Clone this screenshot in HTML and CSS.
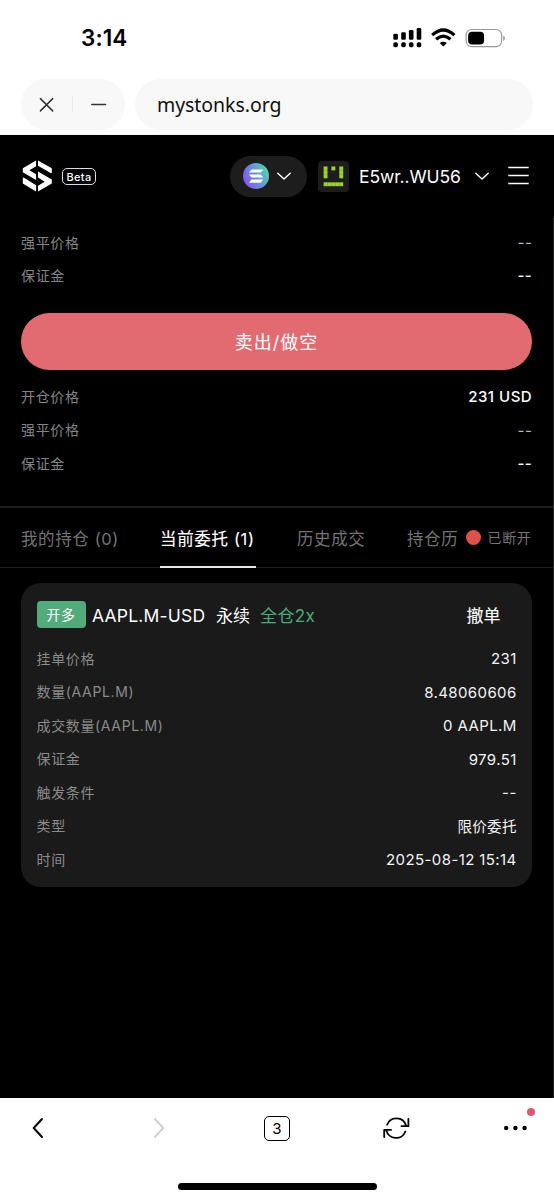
FILE: index.html
```html
<!DOCTYPE html>
<html lang="zh-CN">
<head>
<meta charset="utf-8">
<title>mystonks.org</title>
<link rel="stylesheet" href="styles.css">
</head>
<body>
<div class="phone">
  <div class="status">
    <span class="clock">3:14</span>
    <svg class="status-icons" width="114" height="24" viewBox="0 0 114 24">
      <g fill="#000">
        <rect x="0.3" y="7.7" width="4.6" height="6" rx="1.3"/><rect x="8.2" y="6.2" width="4.6" height="7.5" rx="1.3"/><rect x="15.9" y="4" width="4.6" height="9.7" rx="1.3"/><rect x="23.7" y="2" width="4.6" height="11.7" rx="1.3"/>
        <rect x="0.3" y="16.3" width="4.6" height="5" rx="1.7"/><rect x="8.2" y="16.3" width="4.6" height="5" rx="1.7"/><rect x="15.9" y="16.3" width="4.6" height="5" rx="1.7"/><rect x="23.7" y="16.3" width="4.6" height="5" rx="1.7"/>
        <path d="M46.7 17 Q50.3 14.3 53.9 17 L50.3 20.6Z"/>
      </g>
      <path d="M39.2 9.2 Q50.3 -1.1 61.4 9.2 M43.1 13.3 Q50.3 6.8 57.5 13.3" fill="none" stroke="#000" stroke-width="3.2"/>
      <rect x="73.1" y="3.5" width="35.5" height="17.2" rx="5.6" fill="none" stroke="#999" stroke-width="1.2"/>
      <rect x="75.1" y="5.7" width="16" height="12.9" rx="4" fill="#000"/>
      <path d="M110.2 9.2 Q112 10 112 12.1 Q112 14.3 110.2 15Z" fill="#999"/>
    </svg>
  </div>
  <div class="address">
    <div class="controls">
      <svg width="104" height="51" viewBox="0 0 104 51" fill="none" stroke="#333" stroke-width="1.5" stroke-linecap="round"><path d="M19.4 19.6 L31.7 31.9 M31.7 19.6 L19.4 31.9 M70.8 25.5 H84.5"/><path d="M51.5 18 V33" stroke="#e9e9e9" stroke-width="1"/></svg>
    </div>
    <div class="url">mystonks.org</div>
  </div>

  <main class="app">
    <header class="top">
      <svg class="logo" width="31" height="32" viewBox="0 0 31 32" fill="#fff">
        <path d="M14.1 .5 V6.2 L7.4 10.2 L14.1 14.3 V20 L.8 12.2 V8.3Z"/>
        <path d="M16 .5 L29.8 8.3 V12.8 L29 13.2 L16 5.8Z"/>
        <path d="M16 11.4 L29.8 19.5 V23.6 L16 31.5 V25.8 L22.7 21.7 L16 17.4Z"/>
        <path d="M.8 17.9 L1.6 17.5 L14.1 25.3 V31.5 L.8 23.6Z"/>
      </svg>
      <span class="beta">Beta</span>
      <div class="chain">
        <svg width="26" height="26" viewBox="0 0 26 26">
          <defs><linearGradient id="sol" x1="0" y1=".75" x2="1" y2=".25"><stop offset="0" stop-color="#8a50ed"/><stop offset=".5" stop-color="#688ee0"/><stop offset="1" stop-color="#55d9a7"/></linearGradient></defs>
          <circle cx="13" cy="13" r="13" fill="url(#sol)"/>
          <g fill="#fff"><path d="M8.4 6.4 H20.2 L17.8 9.6 H6Z"/><path d="M6 11.4 H17.8 L20.2 14.6 H8.4Z"/><path d="M8.4 16.5 H20.2 L17.8 19.7 H6Z"/></g>
        </svg>
        <svg class="caret" width="14" height="8" viewBox="0 0 14 8"><path d="M.8 1.2 L7 7 L13.2 1.2"/></svg>
      </div>
      <svg class="avatar" width="31" height="31" viewBox="0 0 31 31">
        <rect width="31" height="31" rx="4" fill="#1d1d1d"/>
        <g fill="#9bd62b"><rect x="5.6" y="5.5" width="3.9" height="11.8"/><rect x="13.4" y="5.5" width="3.9" height="3.9"/><rect x="21.3" y="5.5" width="3.9" height="11.8"/><rect x="5.6" y="21.3" width="19.6" height="3.9"/></g>
        <path d="M5.6 9.4 H9.5 M5.6 13.4 H9.5 M21.3 9.4 H25.2 M21.3 13.4 H25.2 M9.5 21.3 V25.2 M13.4 21.3 V25.2 M17.3 21.3 V25.2 M21.3 21.3 V25.2" stroke="#1d1d1d" stroke-width=".25" opacity=".6"/>
      </svg>
      <span class="wallet">E5wr..WU56</span>
      <svg class="caret wallet-caret" width="14" height="8" viewBox="0 0 14 8"><path d="M.8 1.2 L7 7 L13.2 1.2"/></svg>
      <svg class="menu" width="21" height="20" viewBox="0 0 21 20"><path d="M.3 1.5 H20.7 M.3 9.5 H20.7 M.3 17.5 H20.7" stroke="#fff" stroke-width="1.7"/></svg>
    </header>

    <section class="quote">
      <div class="row"><span>强平价格</span><b class="dim">--</b></div>
      <div class="row"><span>保证金</span><b class="strong">--</b></div>
      <button class="sell">卖出/做空</button>
      <div class="row"><span>开仓价格</span><b class="strong usd">231 USD</b></div>
      <div class="row"><span>强平价格</span><b class="dim">--</b></div>
      <div class="row"><span>保证金</span><b class="strong">--</b></div>
    </section>

    <nav class="tabs">
      <span class="tab tab-held">我的持仓 (0)</span>
      <span class="tab tab-active">当前委托 (1)</span>
      <span class="tab tab-trades">历史成交</span>
      <span class="tab tab-clip">持仓历</span>
      <span class="link-state"><i class="dot"></i>已断开</span>
    </nav>

    <article class="order">
      <div class="order-head">
        <span class="side">开多</span>
        <span class="pair">AAPL.M-USD</span>
        <span class="kind">永续</span>
        <span class="lever">全仓2x</span>
        <span class="cancel">撤单</span>
      </div>
      <div class="row"><span>挂单价格</span><b>231</b></div>
      <div class="row"><span>数量(AAPL.M)</span><b>8.48060606</b></div>
      <div class="row"><span>成交数量(AAPL.M)</span><b>0 AAPL.M</b></div>
      <div class="row"><span>保证金</span><b>979.51</b></div>
      <div class="row"><span>触发条件</span><b>--</b></div>
      <div class="row"><span>类型</span><b class="han">限价委托</b></div>
      <div class="row"><span>时间</span><b>2025-08-12 15:14</b></div>
    </article>
    <div class="scrollbar"></div>
  </main>

  <footer class="browser">
    <div class="tools">
      <svg width="12" height="22" viewBox="0 0 12 22" fill="none" stroke="#000" stroke-width="2" stroke-linecap="round" stroke-linejoin="round"><path d="M10 2 L1.7 11 L10 20"/></svg>
      <svg class="forward" width="12" height="22" viewBox="0 0 12 22" fill="none" stroke="#c8c8c8" stroke-width="1.8" stroke-linecap="round" stroke-linejoin="round"><path d="M2 2 L10.3 11 L2 20"/></svg>
      <span class="count">3</span>
      <svg width="28" height="24" viewBox="0 0 28 24" fill="none" stroke="#000" stroke-width="1.8" stroke-linecap="round" stroke-linejoin="round"><path d="M4.1 8.7 A10 10 0 0 1 23 9.4 M25.4 3 V10.2 H18.5 M22.4 15.5 A10 10 0 0 1 3.3 14.2 M1.2 21 V13.8 H8.1"/></svg>
      <span class="more"><svg width="24" height="6" viewBox="0 0 24 6"><circle cx="2.2" cy="3" r="2.2"/><circle cx="11.4" cy="3" r="2.2"/><circle cx="20.6" cy="3" r="2.2"/></svg><i class="notice"></i></span>
    </div>
    <div class="home"></div>
  </footer>
</div>
</body>
</html>
```
FILE: styles.css
```css
* { box-sizing: border-box; }
body {
  margin: 0;
  background: #fff;
  font-family: Inter, "Noto Sans CJK SC", sans-serif;
}
svg { display: block; flex: none; }
.phone {
  width: 554px;
  height: 1200px;
  overflow: hidden;
  display: flex;
  flex-direction: column;
}
.status {
  height: 79px;
  padding: 0 47px 4px 81px;
  display: flex;
  align-items: center;
  justify-content: space-between;
  flex: none;
}
.clock { font-size: 22.5px; font-weight: 600; letter-spacing: .1px; }
.address {
  height: 56px;
  padding: 0 21px;
  display: flex;
  gap: 10px;
  flex: none;
  border-bottom: 1px solid #f7f7f7;
}
.controls, .url { height: 51px; border-radius: 26px; background: #f8f8f8; }
.controls { width: 104px; flex: none; }
.url {
  flex: 1;
  padding-left: 22px;
  line-height: 51px;
  font-family: "Noto Sans", sans-serif;
  font-size: 19.5px;
  letter-spacing: -.05px;
  color: #111;
}
.app {
  position: relative;
  flex: 1;
  background: #000;
  color: #fff;
}
.top {
  height: 90.7px;
  padding: 0 25px 8px 22px;
  display: flex;
  align-items: center;
}
.beta {
  width: 34px;
  height: 17px;
  margin-left: 9px;
  border: 1.5px solid #ddd;
  border-radius: 5px;
  font-size: 11px;
  font-weight: 500;
  letter-spacing: .35px;
  line-height: 16px;
  text-align: center;
}
.chain {
  width: 77px;
  height: 41px;
  margin-left: 134px;
  padding-left: 13px;
  border-radius: 21px;
  background: #1d1d1d;
  display: flex;
  align-items: center;
  gap: 8px;
}
.caret { fill: none; stroke: #fff; stroke-width: 1.4; stroke-linecap: round; stroke-linejoin: round; }
.avatar { margin-left: 11px; }
.wallet { width: 103px; margin-left: 10px; padding-top: 1px; font-size: 17.5px; letter-spacing: -.1px; white-space: nowrap; }
.wallet-caret { margin-left: 13px; }
.menu { margin-left: auto; }
.quote { padding: 0 22px 25.3px 21px; border-bottom: 2px solid #1e1e1e; }
.row {
  height: 33.5px;
  display: flex;
  align-items: center;
  justify-content: space-between;
  font-size: 14px;
  letter-spacing: .65px;
  color: #858585;
}
.row span, .row .han { padding-bottom: 1.6px; }
.row b { font-weight: 400; font-size: 15px; letter-spacing: .4px; margin-right: -.2px; color: #f4f4f4; }
.row .strong { font-weight: 500; color: #fff; }
.row .usd { letter-spacing: .5px; }
.row .dim { color: #bbb; }
.row .han { font-size: 14.5px; letter-spacing: .3px; }
.sell {
  display: block;
  width: 100%;
  height: 57px;
  margin: 20.3px 0 10px;
  padding: 0;
  border: 0;
  border-radius: 29px;
  background: #e16b71;
  color: #fff;
  font: 400 18px Inter, "Noto Sans CJK SC", sans-serif;
  letter-spacing: 1px;
}
.tabs {
  height: 60px;
  padding: 0 22px 0 21px;
  display: flex;
  border-bottom: 1.5px solid #1e1e1e;
  font-size: 16.5px;
  line-height: 62px;
  color: #747474;
  white-space: nowrap;
}
.tab { flex: none; letter-spacing: .6px; }
.tab-held { width: 139px; }
.tab-active { width: 96px; height: 60px; border-bottom: 2.5px solid #e8e8e8; letter-spacing: .65px; color: #fff; -webkit-text-stroke: .12px #fff; }
.tab-trades { margin-left: 41px; width: 110px; }
.tab-clip { width: 58.5px; }
.link-state { display: flex; align-items: center; gap: 7px; height: 60px; font-size: 14px; letter-spacing: .65px; }
.dot { width: 15px; height: 15px; border-radius: 50%; background: #de524b; }
.order {
  height: 304px;
  margin: 15px 22px 0 21px;
  padding: 0 15.5px;
  border-radius: 20px;
  background: #1a1a1a;
}
.order-head { height: 59px; padding-top: 5px; display: flex; align-items: center; font-size: 17px; white-space: nowrap; }
.side {
  width: 49px;
  height: 27px;
  border-radius: 4px;
  background: #52ab7b;
  font-size: 14px;
  letter-spacing: .5px;
  line-height: 27px;
  text-align: center;
}
.pair { width: 124px; margin-left: 6.5px; padding-top: 1px; font-size: 17.5px; letter-spacing: .2px; }
.kind { width: 44px; }
.lever { color: #4aae7c; letter-spacing: .4px; }
.cancel { margin-left: auto; margin-right: 16px; -webkit-text-stroke: .1px #fff; }
.order .row { color: #8b8b8b; }
.scrollbar { position: absolute; top: 83px; right: 0; bottom: 0; width: 1px; background: #222; }
.browser { height: 102px; flex: none; display: flex; flex-direction: column; align-items: center; background: #fff; }
.tools {
  width: 598px;
  height: 60px;
  flex: none;
  display: grid;
  grid-template-columns: repeat(5, 1fr);
  align-items: center;
  justify-items: center;
}
.forward { margin-left: 4px; }
.count { width: 26px; height: 25px; border: 1.7px solid #000; border-radius: 5px; font-size: 15px; line-height: 23px; text-align: center; }
.more { position: relative; }
.notice { position: absolute; right: -7px; top: -17px; width: 8px; height: 8px; border-radius: 50%; background: #dc5b73; }
.home { width: 199px; height: 6.5px; margin-top: 25px; border-radius: 4px; background: #000; }
```
